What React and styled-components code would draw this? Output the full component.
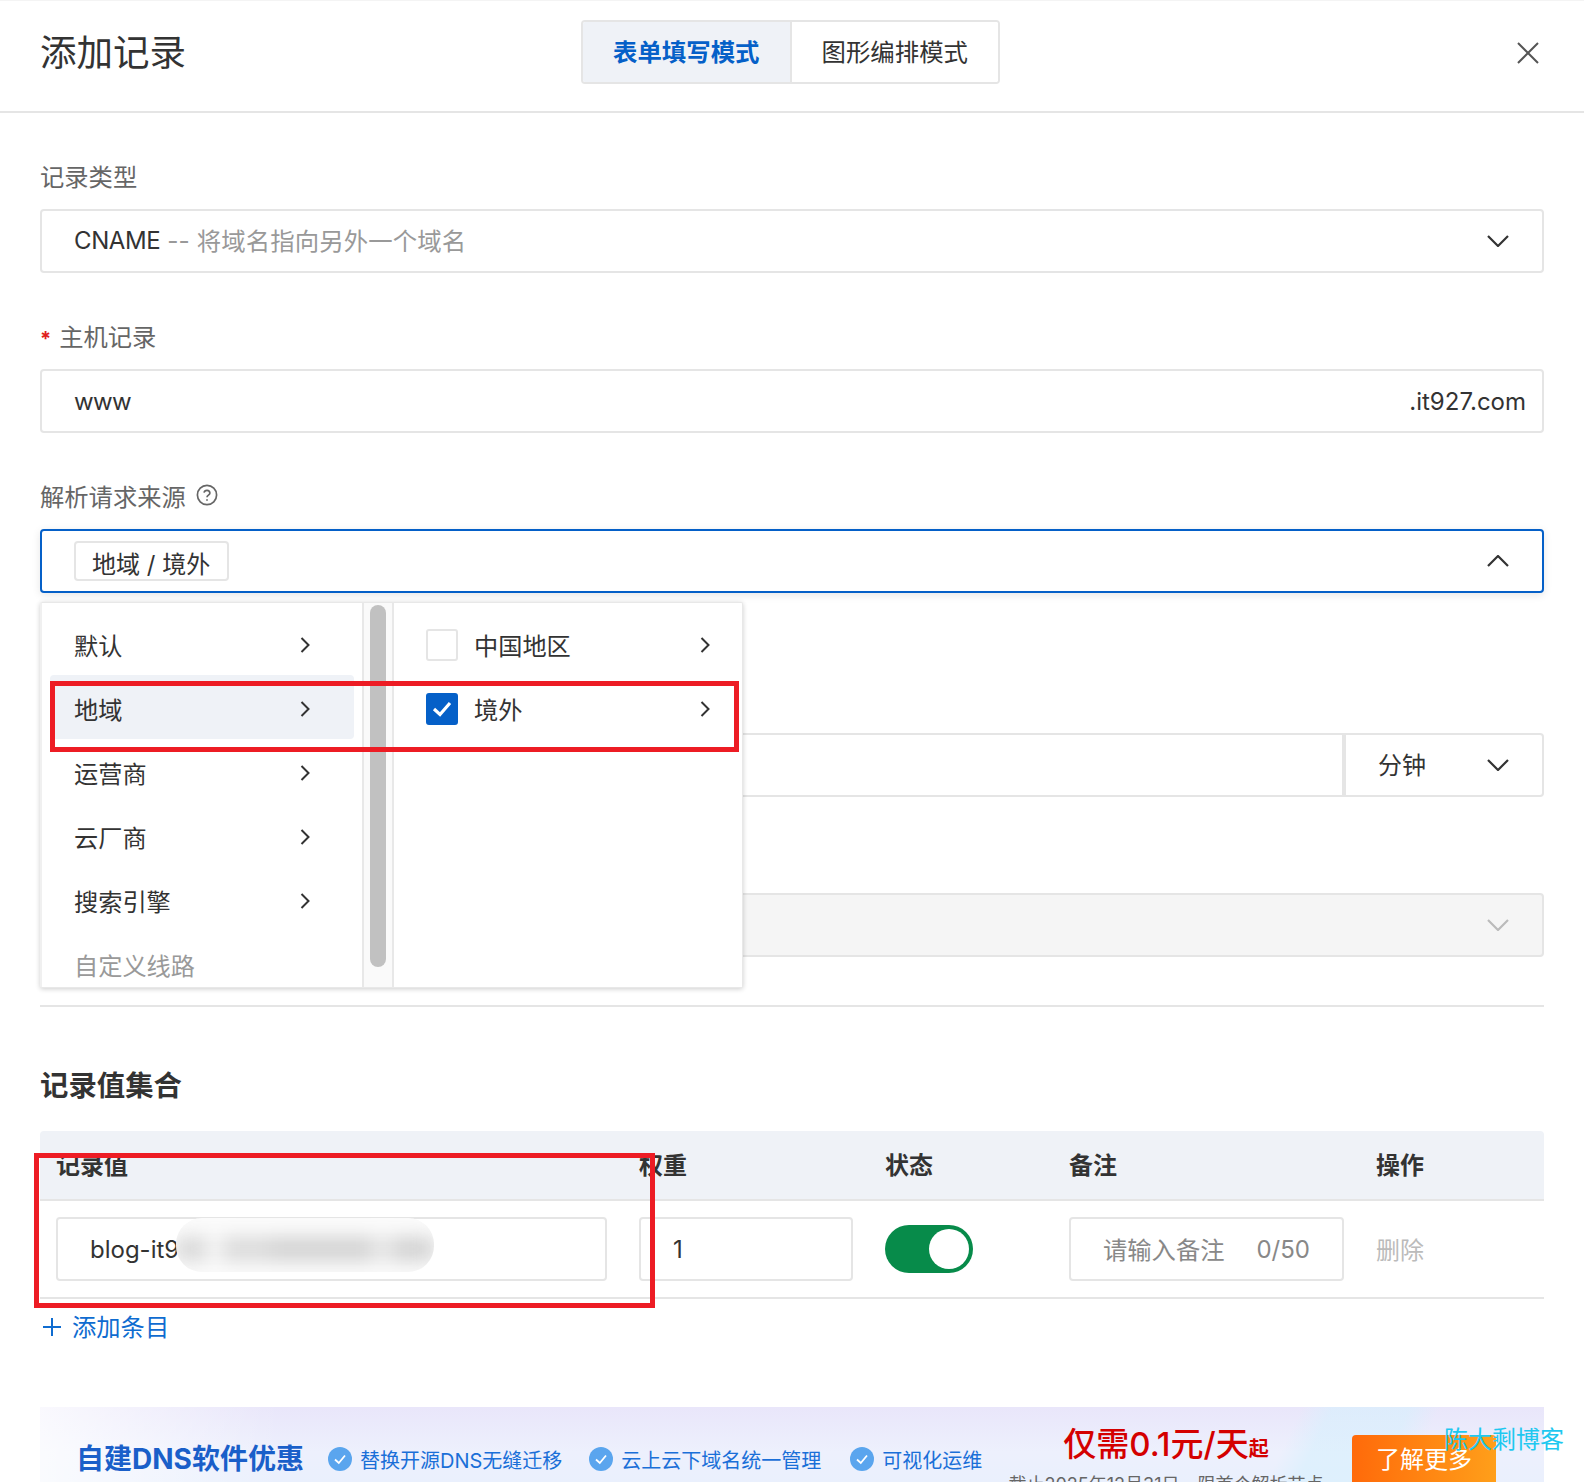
import React from "react";
import styled, { createGlobalStyle } from "styled-components";

const Global = createGlobalStyle`
  html, body { margin: 0; padding: 0; background: #fff; }
  * { box-sizing: border-box; }
  body { font-family: Inter, "Noto Sans CJK SC", sans-serif; color: #333; -webkit-font-smoothing: antialiased; }
`;

const Page = styled.div`
  position: relative;
  width: 1584px;
  height: 1482px;
  overflow: hidden;
  background: #fff;
  border-top: 1px solid #f4f4f4;
`;

const Header = styled.header`
  display: grid;
  grid-template-columns: 541px 419px 1fr;
  align-items: center;
  height: 112px;
  padding: 0 40px;
  border-bottom: 2px solid #e5e5e5;
`;

const Title = styled.h1`
  margin: -6px 0 0;
  font-size: 36.5px;
  font-weight: 400;
  line-height: 50px;
  color: #333;
`;

const Tabs = styled.div`
  display: flex;
  height: 64px;
  margin-top: -8px;
  border: 2px solid #e5e5e5;
  border-radius: 4px;
  overflow: hidden;
`;

const Tab = styled.div`
  flex: 1;
  display: flex;
  align-items: center;
  justify-content: center;
  padding-bottom: 3px;
  font-size: 24.4px;
  font-weight: ${(p) => (p.$active ? 700 : 400)};
  color: ${(p) => (p.$active ? "#0560c8" : "#333")};
  background: ${(p) => (p.$active ? "#eff2f7" : "#fff")};
  & + & { border-left: 2px solid #e5e5e5; }
`;

const CloseWrap = styled.div`
  display: flex;
  justify-content: flex-end;
  margin-right: 5px;
  margin-top: -6px;
  color: #555;
`;

const Form = styled.main`
  padding: 48px 40px 0;
`;

const Group = styled.section`
  position: relative;
  margin-bottom: ${(p) => p.$after || 48}px;
`;

const Label = styled.label`
  display: flex;
  align-items: center;
  gap: 10px;
  height: 32px;
  margin-bottom: 16px;
  padding-bottom: 4px;
  font-size: 24.3px;
  color: #666;
`;

const Req = styled.span`
  color: #e02020;
  font-size: 20px;
  font-weight: 700;
  margin-right: 8px;
`;

const Field = styled.div`
  display: flex;
  align-items: center;
  height: 64px;
  padding: 0 33px 0 32px;
  border: 2px solid ${(p) => (p.$focus ? "#0560c8" : "#e5e5e5")};
  border-radius: 4px;
  background: ${(p) => (p.$disabled ? "#f5f5f5" : "#fff")};
  font-size: 24px;
  color: #333;
  box-shadow: ${(p) => (p.$focus ? "0 2px 8px rgba(0,0,0,.1)" : "none")};
`;

const Grow = styled.div`
  flex: 1;
`;

const TypeName = styled.span`
  letter-spacing: -0.4px;
  margin-top: -1px;
`;

const Hint = styled.span`
  padding-bottom: 3px;
  font-size: 24.4px;
  letter-spacing: 0.1px;
  color: #999;
`;

const HostName = styled.span`
  letter-spacing: -0.6px;
`;

const Suffix = styled.span`
  margin-right: -17px;
  margin-left: -1px;
  color: #333;
`;

const Tag = styled.span`
  display: inline-flex;
  align-items: center;
  height: 40px;
  padding: 2px 17px 0 16px;
  border: 2px solid #e5e5e5;
  border-radius: 4px;
  font-size: 24px;
  color: #333;
`;

const SplitField = styled.div`
  display: flex;
  height: 64px;
`;

const SplitMain = styled.div`
  flex: 1;
  border: 2px solid #e5e5e5;
  border-radius: 4px 0 0 4px;
`;

const SplitUnit = styled.div`
  display: flex;
  align-items: center;
  justify-content: space-between;
  width: 200px;
  padding: 0 33px 0 34px;
  border: 2px solid #e5e5e5;
  border-left-width: 0;
  border-radius: 0 4px 4px 0;
  box-shadow: inset 2px 0 0 #e5e5e5;
  font-size: 24px;
`;

const UnitText = styled.span`
  padding-bottom: 3px;
`;

const Menu = styled.div`
  position: absolute;
  top: 121px;
  left: 0;
  z-index: 5;
  display: flex;
  width: 703px;
  height: 386px;
  background: #fff;
  border: 1px solid #e8e8e8;
  border-left: 2px solid #f0f0f0;
  border-radius: 2px;
  box-shadow: 0 1px 5px rgba(0, 0, 0, 0.2);
  overflow: hidden;
`;

const MenuLeft = styled.div`
  width: 322px;
  padding: 8px 8px 0;
  border-right: 2px solid #e8e8e8;
`;

const Track = styled.div`
  width: 30px;
  padding: 2px 6px 0 6px;
  background: #fafafa;
  border-right: 2px solid #e8e8e8;
`;

const Thumb = styled.div`
  width: 16px;
  height: 362px;
  border-radius: 8px;
  background: #c1c1c1;
`;

const MenuRight = styled.div`
  flex: 1;
  padding: 8px 32px 0 32px;
`;

const Row = styled.div`
  display: flex;
  align-items: center;
  height: 64px;
  padding-top: 2px;
  padding-left: ${(p) => (p.$padded ? "24px" : "0")};
  padding-right: ${(p) => (p.$padded ? "44px" : "0")};
  border-radius: 4px;
  font-size: 24.2px;
  color: ${(p) => (p.$disabled ? "#999" : "#333")};
  background: ${(p) => (p.$hover ? "#eff2f7" : "transparent")};
`;

const RowText = styled.span`
  flex: 1;
  white-space: nowrap;
`;

const ChevSlot = styled.span`
  display: inline-flex;
  margin-top: 2px;
`;

const Check = styled.span`
  display: inline-flex;
  align-items: center;
  justify-content: center;
  width: 32px;
  height: 32px;
  margin-right: 16px;
  margin-top: 2px;
  border-radius: 3px;
  border: 2px solid ${(p) => (p.$on ? "#0560c8" : "#e5e5e5")};
  background: ${(p) => (p.$on ? "#0560c8" : "#fff")};
`;

const Divider = styled.hr`
  margin: 0;
  border: 0;
  border-top: 2px solid #e5e5e5;
`;

const SectionTitle = styled.h2`
  margin: 59px 0 25px;
  font-size: 28.4px;
  font-weight: 700;
  line-height: 40px;
  color: #333;
`;

const Grid = styled.div`
  display: grid;
  grid-template-columns: 551px 214px 152px 275px 1fr;
  column-gap: 32px;
  padding: 0 16px;
`;

const THead = styled(Grid)`
  align-items: center;
  height: 68px;
  padding-bottom: 4px;
  background: #eff2f7;
  border-radius: 4px 4px 0 0;
  font-size: 24px;
  font-weight: 700;
  color: #333;
`;

const TRow = styled(Grid)`
  align-items: center;
  height: 100px;
  padding-top: 16px;
  padding-bottom: 16px;
  border-top: 2px solid #e5e5e5;
  border-bottom: 2px solid #e5e5e5;
`;

const Cell = styled.div`
  position: relative;
  display: flex;
  align-items: center;
  justify-content: space-between;
  height: 64px;
  padding: 0 32px;
  border: 2px solid #e5e5e5;
  border-radius: 4px;
  font-size: 24px;
  color: #333;
`;

const NotePlaceholder = styled.span`
  padding-bottom: 2px;
  font-size: 24.3px;
  color: #888;
`;

const Count = styled.span`
  color: #888;
`;

const Mask = styled.div`
  position: absolute;
  left: 118px;
  top: -1px;
  width: 258px;
  height: 54px;
  border-radius: 26px;
  background: #fbfbfb;
  overflow: hidden;
  filter: blur(0.6px);
`;

const MaskInk = styled.div`
  position: absolute;
  left: 0;
  right: 0;
  top: 19px;
  height: 24px;
  filter: blur(9px);
  background: linear-gradient(
    90deg,
    #d8d8d8 0 12%,
    #f8f8f8 12% 18%,
    #dadada 18% 35%,
    #d2d2d2 38% 76%,
    #e6e6e6 76% 84%,
    #d2d2d2 84% 100%
  );
`;

const Switch = styled.div`
  position: relative;
  width: 88px;
  height: 48px;
  border-radius: 24px;
  background: #078b4a;
`;

const Knob = styled.span`
  position: absolute;
  top: 4px;
  right: 4px;
  width: 40px;
  height: 40px;
  border-radius: 50%;
  background: #fff;
`;

const Del = styled.span`
  padding-bottom: 2px;
  font-size: 24px;
  color: #bbb;
`;

const AddRow = styled.div`
  display: flex;
  align-items: center;
  gap: 11px;
  height: 32px;
  margin-top: 11px;
  padding-left: 3px;
  font-size: 24.3px;
  color: #0f6cd0;
`;

const AddText = styled.span`
  padding-bottom: 2px;
`;

const PlusSlot = styled.span`
  display: inline-flex;
  margin-top: 2px;
`;

const Banner = styled.div`
  position: relative;
  display: flex;
  align-items: flex-start;
  height: 75px;
  margin-top: 65px;
  padding: 33px 0 0 36px;
  background:
    linear-gradient(115deg, transparent 0 82%, rgba(214, 240, 253, 0.6) 84% 89%, transparent 91%),
    linear-gradient(90deg, rgba(255, 255, 255, 0.75) 0, rgba(255, 255, 255, 0) 16%),
    linear-gradient(180deg, #e9e6fa 0%, #edf0fd 60%, #eaf0fd 100%);
  overflow: hidden;
`;

const BannerTitle = styled.div`
  width: 252px;
  font-size: 28px;
  font-weight: 700;
  line-height: 38px;
  color: #1a5fc9;
  white-space: nowrap;
`;

const Perk = styled.div`
  display: flex;
  align-items: center;
  gap: 8px;
  margin-right: ${(p) => p.$mr}px;
  height: 38px;
  font-size: 20px;
  color: #1a6fd8;
  white-space: nowrap;
`;

const Deal = styled.div`
  position: absolute;
  left: 953px;
  top: 15px;
  width: 346px;
  display: flex;
  flex-direction: column;
  align-items: center;
  white-space: nowrap;
`;

const Price = styled.div`
  font-size: 33px;
  font-weight: 500;
  line-height: 44px;
  color: #d40000;
`;

const PriceSmall = styled.span`
  font-size: 20px;
  font-weight: 700;
`;

const DealSub = styled.div`
  margin-top: 1px;
  font-size: 18px;
  line-height: 26px;
  color: #666;
`;

const More = styled.div`
  position: absolute;
  left: 1312px;
  top: 28px;
  display: flex;
  align-items: flex-start;
  justify-content: center;
  width: 144px;
  height: 60px;
  padding-top: 5px;
  border-radius: 4px;
  background: linear-gradient(90deg, #ff6a0a, #ff9f1a);
  color: #fff;
  font-size: 24px;
`;

const Watermark = styled.div`
  position: absolute;
  left: 1444px;
  top: 1422px;
  z-index: 9;
  font-size: 24px;
  line-height: 34px;
  color: #1ec8f0;
  white-space: nowrap;
`;

const Annotation = styled.div`
  position: absolute;
  left: ${(p) => p.$x}px;
  top: ${(p) => p.$y}px;
  width: ${(p) => p.$w}px;
  height: ${(p) => p.$h}px;
  z-index: 8;
  border: 5px solid #ed1c24;
  pointer-events: none;
`;

const Chev = ({ dir = "down", color = "#333" }) => {
  const pts = dir === "down" ? "1,1 11,11 21,1" : "1,11 11,1 21,11";
  return (
    <svg width="22" height="12" viewBox="0 0 22 12" fill="none" stroke={color} strokeWidth="2.2">
      <polyline points={pts} />
    </svg>
  );
};

const Right = () => (
  <ChevSlot>
    <svg width="10" height="16" viewBox="0 0 10 16" fill="none" stroke="#333" strokeWidth="2">
      <polyline points="1.5,1 8.5,8 1.5,15" />
    </svg>
  </ChevSlot>
);

const Help = () => (
  <svg width="22" height="22" viewBox="0 0 22 22" fill="none" stroke="#666" strokeWidth="1.7">
    <circle cx="11" cy="11" r="9.6" />
    <path d="M8 8.6a3 3 0 0 1 5.9.4c0 2-2.9 2.2-2.9 4.2" />
    <path d="M11 15.2v1.6" />
  </svg>
);

const Close = () => (
  <svg width="22" height="22" viewBox="0 0 22 22" fill="none" stroke="currentColor" strokeWidth="2">
    <path d="M1 1 21 21M21 1 1 21" />
  </svg>
);

const Tick = () => (
  <svg width="20" height="16" viewBox="0 0 20 16" fill="none" stroke="#fff" strokeWidth="3.2">
    <polyline points="2,8 8,13.5 18,2" />
  </svg>
);

const Plus = () => (
  <PlusSlot>
    <svg width="18" height="18" viewBox="0 0 18 18" stroke="#0f6cd0" strokeWidth="2">
      <path d="M9 0v18M0 9h18" />
    </svg>
  </PlusSlot>
);

const PerkIcon = () => (
  <svg width="24" height="24" viewBox="0 0 24 24">
    <circle cx="12" cy="12" r="12" fill="#5aa5ee" />
    <polyline points="7,12.5 10.8,16 17,8.5" fill="none" stroke="#fff" strokeWidth="1.8" />
  </svg>
);

const LEFT = ["默认", "地域", "运营商", "云厂商", "搜索引擎"];

export default function App() {
  return (
    <Page>
      <Global />
      <Header>
        <Title>添加记录</Title>
        <Tabs>
          <Tab $active>表单填写模式</Tab>
          <Tab>图形编排模式</Tab>
        </Tabs>
        <CloseWrap>
          <Close />
        </CloseWrap>
      </Header>
      <Form>
        <Group>
          <Label>记录类型</Label>
          <Field>
            <TypeName>CNAME</TypeName>
            <Hint>&nbsp;-- 将域名指向另外一个域名</Hint>
            <Grow />
            <Chev />
          </Field>
        </Group>
        <Group>
          <Label>
            <span>
              <Req>*</Req>主机记录
            </span>
          </Label>
          <Field>
            <HostName>www</HostName>
            <Grow />
            <Suffix>.it927.com</Suffix>
          </Field>
        </Group>
        <Group $after={92}>
          <Label>
            解析请求来源 <Help />
          </Label>
          <Field $focus>
            <Tag>地域 / 境外</Tag>
            <Grow />
            <Chev dir="up" />
          </Field>
          <Menu>
            <MenuLeft>
              {LEFT.map((t, i) => (
                <Row key={t} $padded $hover={i === 1}>
                  <RowText>{t}</RowText>
                  <Right />
                </Row>
              ))}
              <Row $padded $disabled>
                <RowText>自定义线路</RowText>
              </Row>
            </MenuLeft>
            <Track>
              <Thumb />
            </Track>
            <MenuRight>
              <Row>
                <Check />
                <RowText>中国地区</RowText>
                <Right />
              </Row>
              <Row>
                <Check $on>
                  <Tick />
                </Check>
                <RowText>境外</RowText>
                <Right />
              </Row>
            </MenuRight>
          </Menu>
        </Group>
        <Group>
          <Label />
          <SplitField>
            <SplitMain />
            <SplitUnit>
              <UnitText>分钟</UnitText>
              <Chev />
            </SplitUnit>
          </SplitField>
        </Group>
        <Group>
          <Label />
          <Field $disabled>
            <Grow />
            <Chev color="#bbb" />
          </Field>
        </Group>
        <Divider />
        <SectionTitle>记录值集合</SectionTitle>
        <THead>
          <span>记录值</span>
          <span>权重</span>
          <span>状态</span>
          <span>备注</span>
          <span>操作</span>
        </THead>
        <TRow>
          <Cell>
            blog-it9
            <Mask>
              <MaskInk />
            </Mask>
          </Cell>
          <Cell>1</Cell>
          <Switch>
            <Knob />
          </Switch>
          <Cell>
            <NotePlaceholder>请输入备注</NotePlaceholder>
            <Count>0/50</Count>
          </Cell>
          <Del>删除</Del>
        </TRow>
        <AddRow>
          <Plus />
          <AddText>添加条目</AddText>
        </AddRow>
        <Banner>
          <BannerTitle>自建DNS软件优惠</BannerTitle>
          <Perk $mr={27}>
            <PerkIcon />
            替换开源DNS无缝迁移
          </Perk>
          <Perk $mr={29}>
            <PerkIcon />
            云上云下域名统一管理
          </Perk>
          <Perk $mr={0}>
            <PerkIcon />
            可视化运维
          </Perk>
          <Deal>
            <Price>
              仅需0.1元/天<PriceSmall>起</PriceSmall>
            </Price>
            <DealSub>截止2025年12月31日，限首个解析节点</DealSub>
          </Deal>
          <More>了解更多</More>
        </Banner>
      </Form>
      <Annotation $x={50} $y={680} $w={689} $h={71} />
      <Annotation $x={34} $y={1152} $w={621} $h={155} />
      <Watermark>陈大剩博客</Watermark>
    </Page>
  );
}
